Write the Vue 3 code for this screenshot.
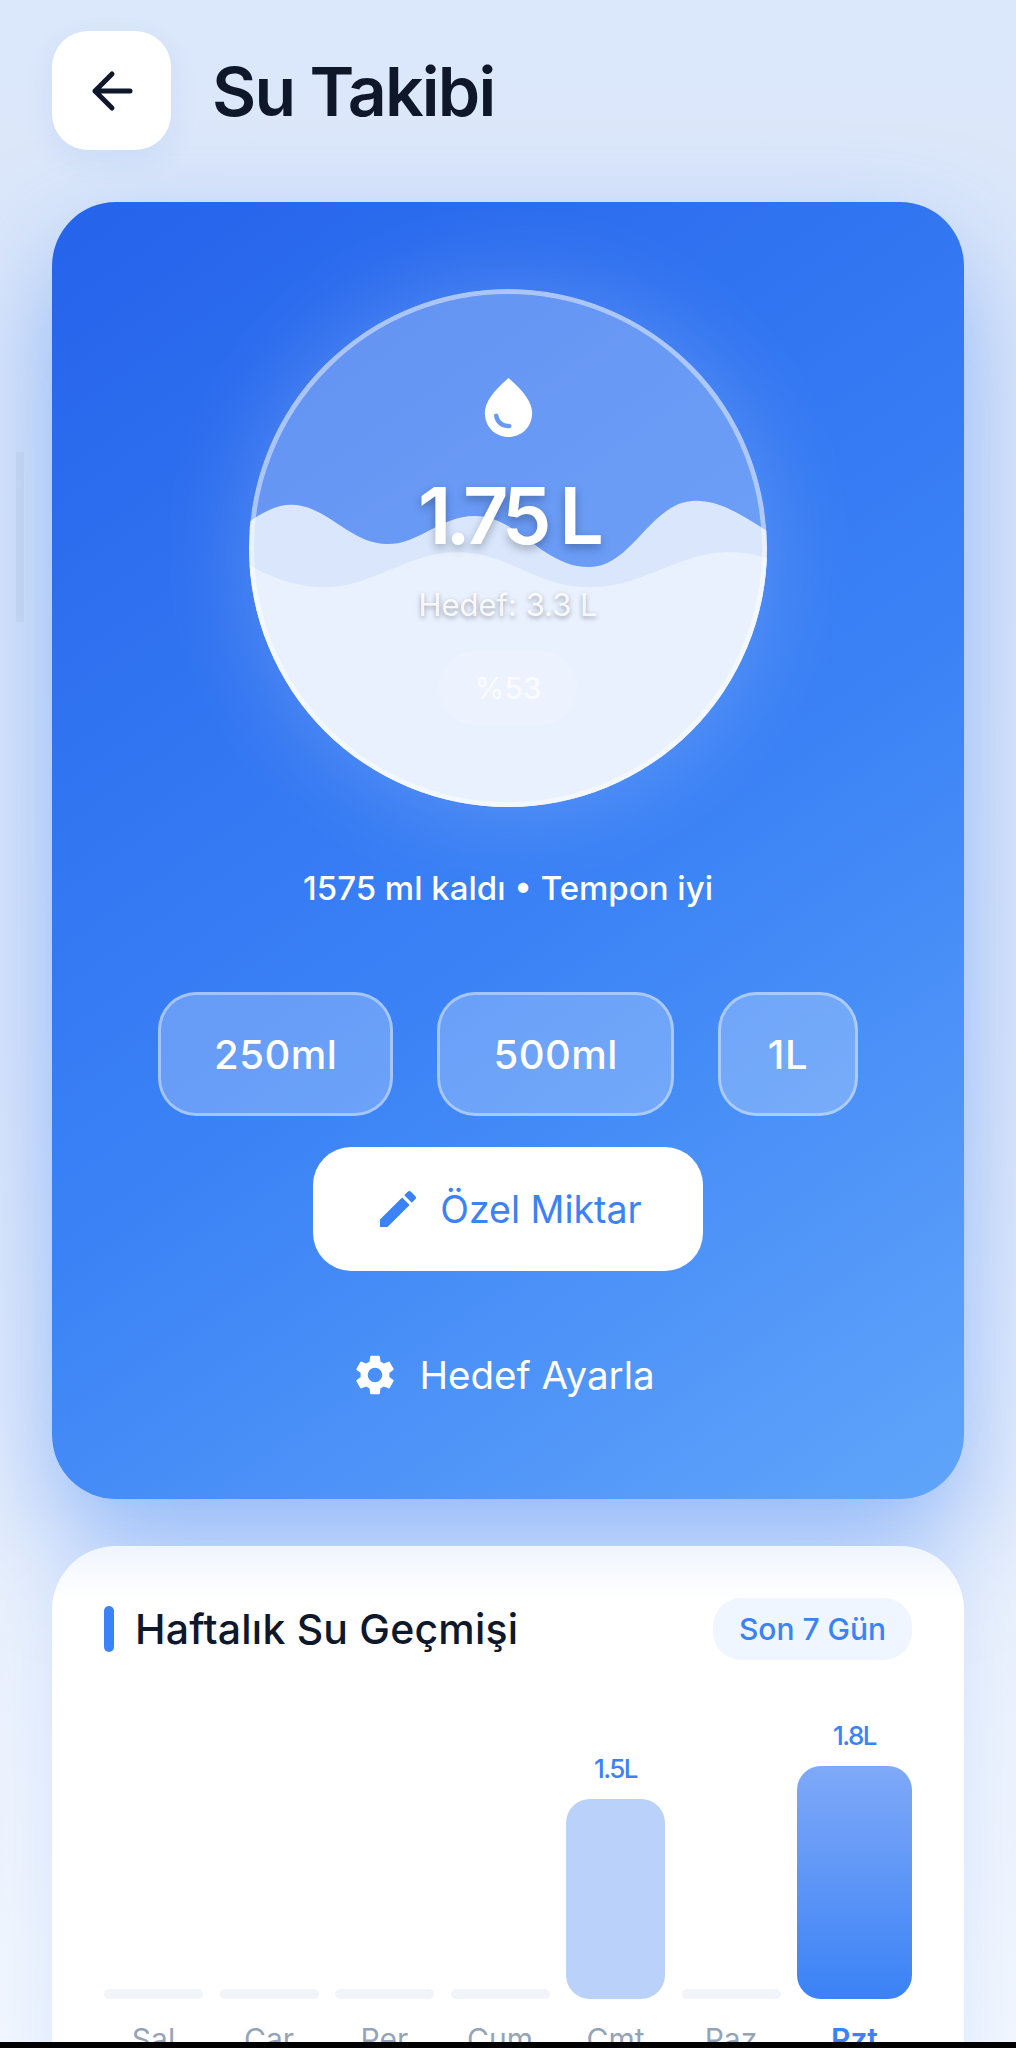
<template>
    <div class="page">
        <header class="top-bar">
            <button class="back-btn">
                <svg width="48" height="48" viewBox="0 0 48 48" fill="none" stroke="#0f172a" stroke-width="5" stroke-linecap="round" stroke-linejoin="round">
                    <path d="M42 24H7M24 7L7 24l17 17" />
                </svg>
            </button>
            <h1 class="page-title">Su Takibi</h1>
        </header>

        <section class="hero">
            <div class="glass">
                <svg class="waves" viewBox="0 0 516 516" width="518" height="518">
                    <path fill="#d9e6fc" d="M0 232C14 222 28 215 42 215C78 215 100 254 138 254C170 254 190 226 225 226C268 226 292 277 339 277C382 277 400 211 445 211C472 211 495 228 516 241V516H0Z" />
                    <path fill="#e9f0fe" d="M0 275C24 288 48 297 75 297C122 297 160 262 207 262C258 262 286 297 339 297C392 297 430 262 477 262C490 262 503 264 516 268V516H0Z" />
                </svg>
                <div class="glass-body">
                    <svg class="drop" width="71" height="71" viewBox="0 0 24 24" fill="#fff">
                        <path d="M12 2c-5.33 4.55-8 8.48-8 11.8 0 4.98 3.8 8.2 8 8.2s8-3.22 8-8.2c0-3.32-2.67-7.25-8-11.8zM7.83 14c.37 0 .67.26.74.62.41 2.22 2.28 2.98 3.64 2.87.43-.02.79.32.79.75 0 .4-.32.73-.72.75-2.13.13-4.62-1.09-5.18-4.06-.08-.44.27-.93.73-.93z" />
                    </svg>
                    <div class="amount">1.75 L</div>
                    <div class="goal">Hedef: 3.3 L</div>
                    <div class="percent">%53</div>
                </div>
            </div>

            <p class="status">1575 ml kaldı • Tempon iyi</p>

            <div class="actions">
                <button v-for="item in amounts" :key="item" class="amount-btn" :class="{ short: item === '1L' }">{{ item }}</button>
                <button class="custom-btn">
                    <svg width="48" height="48" viewBox="0 0 24 24" fill="#3b82f6">
                        <path d="M3 17.25V21h3.75L17.81 9.94l-3.75-3.75L3 17.25zM20.71 7.04c.39-.39.39-1.02 0-1.41l-2.34-2.34c-.39-.39-1.02-.39-1.41 0l-1.83 1.83 3.75 3.75 1.83-1.83z" />
                    </svg>
                    <span>Özel Miktar</span>
                </button>
            </div>

            <div class="goal-link">
                <svg width="48" height="48" viewBox="0 0 24 24" fill="#fff">
                    <path d="M19.14 12.94c.04-.3.06-.61.06-.94 0-.32-.02-.64-.07-.94l2.03-1.58c.18-.14.23-.41.12-.61l-1.92-3.32c-.12-.22-.37-.29-.59-.22l-2.39.96c-.5-.38-1.03-.7-1.62-.94l-.36-2.54c-.04-.24-.24-.41-.48-.41h-3.84c-.24 0-.43.17-.47.41l-.36 2.54c-.59.24-1.13.57-1.62.94l-2.39-.96c-.22-.08-.47 0-.59.22L2.74 8.87c-.12.21-.08.47.12.61l2.03 1.58c-.05.3-.09.63-.09.94s.02.64.07.94l-2.03 1.58c-.18.14-.23.41-.12.61l1.92 3.32c.12.22.37.29.59.22l2.39-.96c.5.38 1.03.7 1.62.94l.36 2.54c.05.24.24.41.48.41h3.84c.24 0 .44-.17.47-.41l.36-2.54c.59-.24 1.13-.56 1.62-.94l2.39.96c.22.08.47 0 .59-.22l1.92-3.32c.12-.22.07-.47-.12-.61l-2.01-1.58zM12 15.6c-1.98 0-3.6-1.62-3.6-3.6s1.62-3.6 3.6-3.6 3.6 1.62 3.6 3.6-1.62 3.6-3.6 3.6z" />
                </svg>
                <span>Hedef Ayarla</span>
            </div>
        </section>

        <section class="history">
            <div class="history-head">
                <span class="accent"></span>
                <h2 class="history-title">Haftalık Su Geçmişi</h2>
                <span class="range">Son 7 Gün</span>
            </div>
            <div class="chart">
                <div v-for="day in days" :key="day.name" class="col" :class="{ today: day.today }">
                    <span v-if="day.label" class="bar-value">{{ day.label }}</span>
                    <div class="bar" :class="{ filled: day.label }" :style="{ height: day.height + 'px' }"></div>
                    <span class="day">{{ day.name }}</span>
                </div>
            </div>
        </section>

        <div class="edge-handle"></div>
        <div class="bottom-strip"></div>
    </div>
</template>

<script setup>
const amounts = ["250ml", "500ml", "1L"];

const days = [
    { name: "Sal", height: 10 },
    { name: "Çar", height: 10 },
    { name: "Per", height: 10 },
    { name: "Cum", height: 10 },
    { name: "Cmt", height: 200, label: "1.5L" },
    { name: "Paz", height: 10 },
    { name: "Pzt", height: 233, label: "1.8L", today: true },
];
</script>

<style>
html,
body {
    margin: 0;
    background: #dce8fb;
}
</style>

<style scoped>
.page {
    position: relative;
    width: 1016px;
    height: 2048px;
    overflow: hidden;
    box-sizing: border-box;
    padding: 31px 52px 0;
    font-family: Inter, "Liberation Sans", sans-serif;
    background: linear-gradient(180deg, #dbe7fa 0%, #dfe9fb 50%, #f1f6fe 100%);
}

.top-bar {
    display: flex;
    align-items: center;
    gap: 41px;
}

.back-btn {
    display: flex;
    align-items: center;
    justify-content: center;
    width: 119px;
    height: 119px;
    padding: 0;
    border: 0;
    border-radius: 36px;
    background: #fff;
    box-shadow: 0 10px 30px rgba(37, 99, 235, 0.08);
}

.page-title {
    margin: 0;
    font-size: 68px;
    font-weight: 600;
    letter-spacing: -1.8px;
    color: #0f172a;
}

.hero {
    display: flex;
    flex-direction: column;
    align-items: center;
    box-sizing: border-box;
    height: 1297px;
    margin-top: 52px;
    padding-top: 87px;
    border-radius: 64px;
    background: linear-gradient(145deg, #2563eb 0%, #3b82f6 55%, #60a5fa 100%);
    box-shadow: 0 50px 110px rgba(59, 130, 246, 0.5);
}

.glass {
    position: relative;
    flex: none;
    width: 518px;
    height: 518px;
    overflow: hidden;
    border-radius: 50%;
    background: rgba(255, 255, 255, 0.27);
    box-shadow: 0 0 100px rgba(255, 255, 255, 0.2);
}

.glass::after {
    content: "";
    position: absolute;
    inset: 0;
    box-sizing: border-box;
    border: 5px solid rgba(255, 255, 255, 0.45);
    border-radius: 50%;
}

.waves {
    position: absolute;
    left: 0;
    top: 0;
}

.glass-body {
    position: relative;
    display: flex;
    flex-direction: column;
    align-items: center;
    padding-top: 83px;
}

.amount {
    margin-top: 27px;
    font-size: 79px;
    line-height: 90px;
    font-weight: 600;
    letter-spacing: -6px;
    color: #fff;
    text-shadow: 0 4px 10px rgba(0, 0, 0, 0.28);
}

.goal {
    margin-top: 25px;
    font-size: 31px;
    line-height: 40px;
    color: rgba(255, 255, 255, 0.9);
    text-shadow: 0 2px 5px rgba(0, 0, 0, 0.35);
}

.percent {
    display: flex;
    align-items: center;
    justify-content: center;
    width: 138px;
    height: 74px;
    margin-top: 26px;
    border-radius: 37px;
    font-size: 30px;
    font-weight: 500;
    color: rgba(255, 255, 255, 0.7);
    background: rgba(255, 255, 255, 0.2);
}

.status {
    margin: 58px 0 0;
    font-size: 33px;
    line-height: 46px;
    font-weight: 500;
    color: #fff;
}

.actions {
    display: flex;
    flex-wrap: wrap;
    justify-content: center;
    gap: 31px 44px;
    width: 720px;
    margin-top: 81px;
}

.amount-btn {
    flex: none;
    height: 124px;
    box-sizing: border-box;
    padding: 0 53px;
    border: 3px solid rgba(255, 255, 255, 0.4);
    border-radius: 38px;
    font-family: inherit;
    font-size: 40px;
    font-weight: 500;
    letter-spacing: 0.5px;
    color: #fff;
    background: rgba(255, 255, 255, 0.24);
}

.amount-btn.short {
    width: 140px;
    padding: 0;
}

.custom-btn {
    display: flex;
    align-items: center;
    justify-content: center;
    gap: 18px;
    width: 390px;
    height: 124px;
    padding: 0;
    border: 0;
    border-radius: 38px;
    font-family: inherit;
    font-size: 37.5px;
    color: #3b82f6;
    background: #fff;
}

.goal-link {
    display: flex;
    align-items: center;
    gap: 20px;
    margin: 80px 10px 0 0;
    font-size: 38.5px;
    color: #fff;
}

.history {
    height: 600px;
    box-sizing: border-box;
    margin-top: 47px;
    padding: 52px 52px 0;
    border-radius: 64px;
    background: linear-gradient(180deg, #f0f5fd 0%, #fff 9%);
    box-shadow: 0 20px 60px rgba(59, 130, 246, 0.12);
}

.history-head {
    display: flex;
    align-items: center;
    height: 62px;
}

.accent {
    width: 10px;
    height: 46px;
    border-radius: 5px;
    background: #3b82f6;
}

.history-title {
    flex: 1;
    margin: 0 0 0 21px;
    font-size: 41px;
    font-weight: 500;
    letter-spacing: 0.2px;
    color: #0f172a;
}

.range {
    display: flex;
    align-items: center;
    justify-content: center;
    width: 199px;
    height: 62px;
    border-radius: 28px;
    font-size: 30px;
    font-weight: 500;
    color: #3b82f6;
    background: #eff6ff;
}

.chart {
    display: flex;
    align-items: flex-start;
    gap: 16.5px;
    height: 420px;
}

.col {
    position: relative;
    display: flex;
    flex-direction: column;
    align-items: center;
    justify-content: flex-end;
    width: 99px;
    height: 339px;
}

.col.today {
    width: 115px;
}

.bar-value {
    margin-bottom: 14px;
    font-size: 26px;
    line-height: 32px;
    font-weight: 500;
    letter-spacing: -1.5px;
    color: #3b82f6;
}

.bar {
    width: 100%;
    border-radius: 6px;
    background: #f1f5f9;
}

.bar.filled {
    border-radius: 24px;
    background: #bad1fa;
}

.today .bar {
    background: linear-gradient(180deg, #7fa9f8 0%, #3b82f6 100%);
}

.day {
    position: absolute;
    top: 100%;
    margin-top: 20px;
    font-size: 30px;
    line-height: 40px;
    color: #94a3b8;
}

.today .day {
    font-weight: 600;
    color: #3b82f6;
}

.edge-handle {
    position: absolute;
    left: 16px;
    top: 452px;
    width: 8px;
    height: 170px;
    background: rgba(148, 163, 184, 0.12);
}

.bottom-strip {
    position: absolute;
    left: 0;
    right: 0;
    bottom: 0;
    height: 6px;
    background: #000;
}
</style>
